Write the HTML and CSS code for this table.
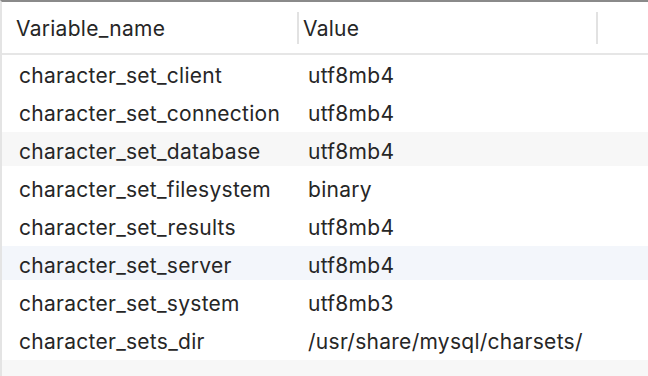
FILE: index.html
```html
<!DOCTYPE html>
<html>
<head>
<meta charset="utf-8">
<link rel="stylesheet" href="styles.css">
</head>
<body>
<div class="grid">
  <div class="head">
    <div class="hcell name">Variable_name</div>
    <div class="hcell value">Value</div>
    <div class="hcell rest"></div>
  </div>
  <div class="rows">
    <div class="row"><div class="cell name">character_set_client</div><div class="cell value">utf8mb4</div></div>
    <div class="row"><div class="cell name">character_set_connection</div><div class="cell value">utf8mb4</div></div>
    <div class="row alt"><div class="cell name">character_set_database</div><div class="cell value">utf8mb4</div></div>
    <div class="row"><div class="cell name">character_set_filesystem</div><div class="cell value">binary</div></div>
    <div class="row"><div class="cell name">character_set_results</div><div class="cell value">utf8mb4</div></div>
    <div class="row hover"><div class="cell name">character_set_server</div><div class="cell value">utf8mb4</div></div>
    <div class="row"><div class="cell name">character_set_system</div><div class="cell value">utf8mb3</div></div>
    <div class="row"><div class="cell name">character_sets_dir</div><div class="cell value">/usr/share/mysql/charsets/</div></div>
    <div class="row alt"></div>
  </div>
</div>
</body>
</html>
```

FILE: styles.css
```css
html, body {
  margin: 0;
  padding: 0;
  background: #fff;
  overflow: hidden;
}
body {
  width: 648px;
  height: 376px;
  font-family: "Inter", "Liberation Sans", sans-serif;
  font-size: 21px;
  letter-spacing: 0.27px;
  color: #262626;
}
.grid {
  height: 376px;
  box-sizing: border-box;
  border-top: 2px solid #8a8a8a;
  border-left: 2px solid #e4e4e4;
}
.head {
  display: grid;
  grid-template-columns: 297px 299px 1fr;
  height: 51px;
  border-bottom: 2px solid #e6e6e6;
  align-items: center;
}
.hcell {
  height: 32px;
  display: flex;
  align-items: center;
  border-right: 2px solid #e2e2e2;
  box-sizing: border-box;
  padding-top: 2px;
}
.hcell.name { padding-left: 14px; }
.hcell.value { padding-left: 4px; }
.hcell.rest { border-right: none; }
.rows {
  display: flex;
  flex-direction: column;
  gap: 4px;
  padding-top: 1px;
}
.row {
  display: grid;
  grid-template-columns: 296px 1fr;
  height: 34px;
  align-items: center;
}
.row.alt { background: #f7f7f7; }
.row.hover { background: #f3f6fb; }
.cell { padding-top: 5px; }
.cell.name { padding-left: 17px; white-space: nowrap; }
.cell.value { padding-left: 10px; white-space: nowrap; }
```
